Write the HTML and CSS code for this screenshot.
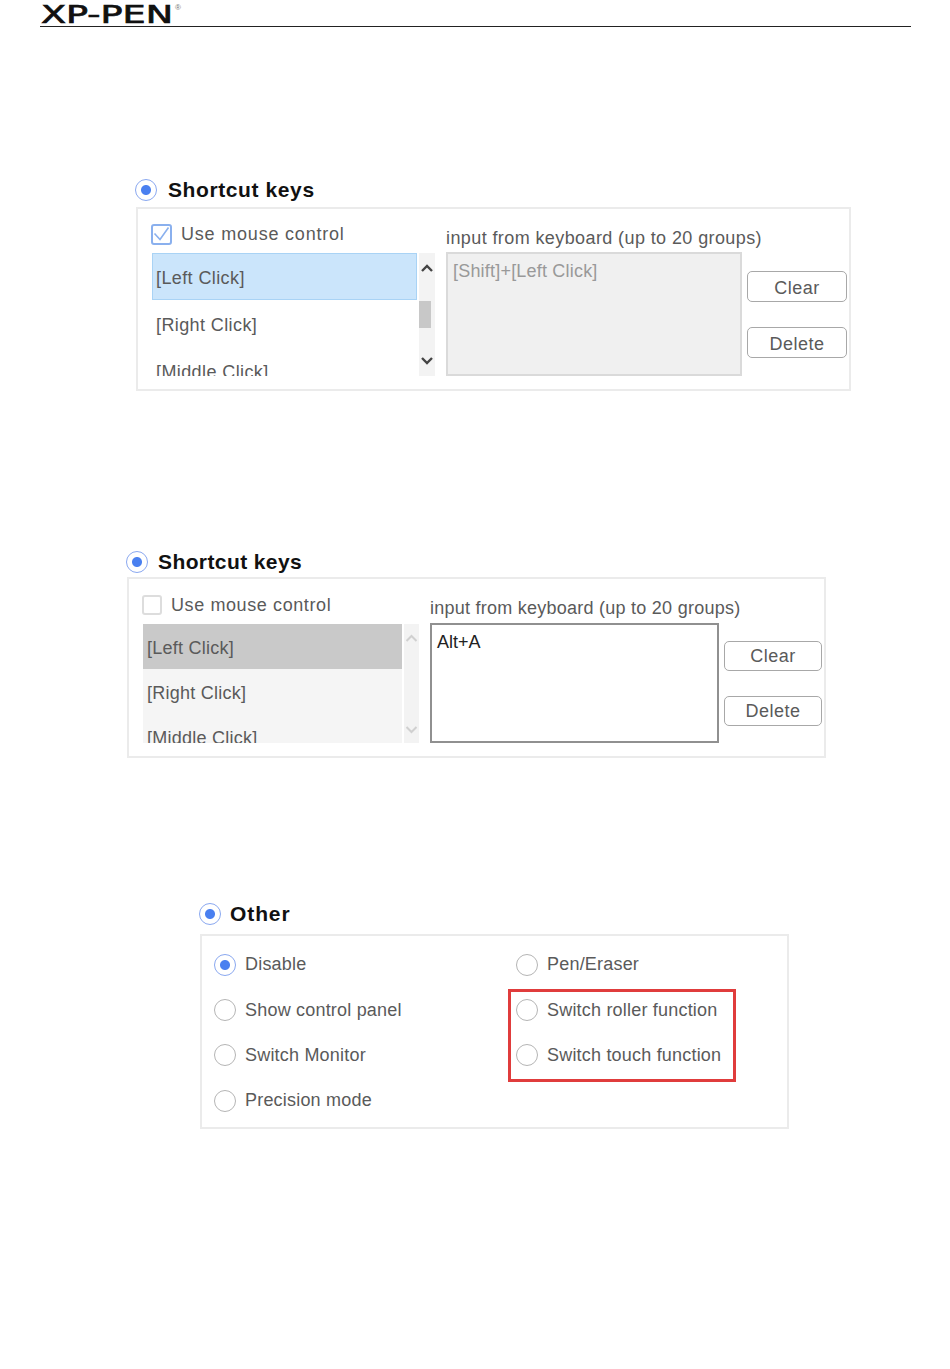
FILE: index.html
```html
<!DOCTYPE html>
<html lang="en">
<head>
    <meta charset="UTF-8">
    <meta name="viewport" content="width=device-width, initial-scale=1.0">
    <title>XP-PEN</title>
    <link rel="stylesheet" href="styles.css">
</head>
<body>
    <header class="page-header">
        <svg class="logo" width="142" height="29" viewBox="0 0 142 29">
            <text x="0" y="22.5" textLength="132" lengthAdjust="spacingAndGlyphs" class="logo-text">XP-PEN</text>
            <text x="134" y="10" class="logo-mark">®</text>
        </svg>
    </header>

    <section class="group group-one">
        <div class="group-title"><span class="radio checked"></span>Shortcut keys</div>
        <div class="panel">
            <div class="left-col">
                <label class="check-row">
                    <span class="checkbox on">
                        <svg width="21" height="21" viewBox="0 0 21 21"><path d="M3.5 9.5 L9 15.5 L17.5 3.5" fill="none" stroke="#8ab0ee" stroke-width="1.6"/></svg>
                    </span>
                    Use mouse control
                </label>
                <div class="list-wrap">
                    <ul class="key-list">
                        <li class="selected">[Left Click]</li>
                        <li>[Right Click]</li>
                        <li>[Middle Click]</li>
                    </ul>
                    <div class="scrollbar">
                        <svg width="16" height="16" viewBox="0 0 16 16"><path d="M3 11 L8 6 L13 11" fill="none" stroke="#444" stroke-width="2.4"/></svg>
                        <span class="thumb"></span>
                        <svg width="16" height="16" viewBox="0 0 16 16"><path d="M3 5 L8 10 L13 5" fill="none" stroke="#444" stroke-width="2.4"/></svg>
                    </div>
                </div>
            </div>
            <div class="right-col">
                <div class="input-label">input from keyboard (up to 20 groups)</div>
                <div class="input-box disabled">[Shift]+[Left Click]</div>
            </div>
            <div class="buttons">
                <button class="btn">Clear</button>
                <button class="btn">Delete</button>
            </div>
        </div>
    </section>

    <section class="group group-two">
        <div class="group-title"><span class="radio checked"></span>Shortcut keys</div>
        <div class="panel">
            <div class="left-col">
                <label class="check-row">
                    <span class="checkbox"></span>
                    Use mouse control
                </label>
                <div class="list-wrap">
                    <ul class="key-list">
                        <li class="selected">[Left Click]</li>
                        <li>[Right Click]</li>
                        <li>[Middle Click]</li>
                    </ul>
                    <div class="scrollbar">
                        <svg width="15" height="16" viewBox="0 0 15 16"><path d="M2.5 11 L7.5 6 L12.5 11" fill="none" stroke="#d0d0d0" stroke-width="2"/></svg>
                        <svg width="15" height="16" viewBox="0 0 15 16"><path d="M2.5 5 L7.5 10 L12.5 5" fill="none" stroke="#d0d0d0" stroke-width="2"/></svg>
                    </div>
                </div>
            </div>
            <div class="right-col">
                <div class="input-label">input from keyboard (up to 20 groups)</div>
                <div class="input-box">Alt+A</div>
            </div>
            <div class="buttons">
                <button class="btn">Clear</button>
                <button class="btn">Delete</button>
            </div>
        </div>
    </section>

    <section class="group group-three">
        <div class="group-title"><span class="radio checked"></span>Other</div>
        <div class="panel options">
            <div class="option-col">
                <div class="option"><span class="radio checked"></span>Disable</div>
                <div class="option"><span class="radio"></span>Show control panel</div>
                <div class="option"><span class="radio"></span>Switch Monitor</div>
                <div class="option"><span class="radio"></span>Precision mode</div>
            </div>
            <div class="option-col">
                <div class="option"><span class="radio"></span>Pen/Eraser</div>
                <div class="option"><span class="radio"></span>Switch roller function</div>
                <div class="option"><span class="radio"></span>Switch touch function</div>
                <div class="highlight"></div>
            </div>
        </div>
    </section>
</body>
</html>
```

FILE: styles.css
```css
* {
    margin: 0;
    padding: 0;
    box-sizing: border-box;
    font-family: 'Liberation Sans', Arial, sans-serif;
}

body {
    background-color: #fff;
    color: #5a5a5a;
    min-height: 1369px;
    overflow: hidden;
}

/* Header */
.page-header {
    margin: 0 39px 0 40px;
    height: 27px;
    border-bottom: 1px solid #222;
}

.logo {
    display: block;
    margin-left: 1px;
}

.logo-text {
    font-size: 24px;
    font-family: 'DejaVu Sans', sans-serif;
    fill: #111;
    stroke: #111;
    stroke-width: 0.7px;
}

.logo-mark {
    font-size: 8px;
    fill: #777;
}

/* Groups */
.group-title {
    display: flex;
    align-items: center;
    gap: 11px;
    height: 24px;
    font-size: 21px;
    font-weight: bold;
    letter-spacing: 0.6px;
    color: #111;
}

.panel {
    display: flex;
    border: 2px solid #ebebeb;
    font-size: 18px;
}

.group-one {
    margin: 151px 0 0 135px;
}

.group-one .panel {
    margin: 5px 0 0 1px;
    width: 715px;
    height: 184px;
    padding: 14px 0 0 13px;
    letter-spacing: 0.4px;
}

.group-two {
    margin: 159px 0 0 126px;
}

.group-two .group-title {
    gap: 10px;
    letter-spacing: 0.4px;
}

.group-two .panel {
    margin: 3px 0 0 1px;
    width: 699px;
    height: 181px;
    padding: 15px 0 0 13px;
    letter-spacing: 0.25px;
}

.group-three {
    margin: 144px 0 0 199px;
}

.group-three .group-title {
    gap: 9px;
    letter-spacing: 0.9px;
}

.group-three .panel {
    margin: 8px 0 0 1px;
    width: 589px;
    height: 195px;
}

/* Radios and checkboxes */
.radio {
    flex: none;
    width: 22px;
    height: 22px;
    border: 1.5px solid #b5b5b5;
    border-radius: 50%;
    background: #fff;
}

.radio.checked {
    border-color: #8aa8f0;
    background: radial-gradient(circle, #4a80f0 0 4.5px, #fff 5.5px);
}

.check-row {
    display: flex;
    align-items: center;
    gap: 9px;
    height: 30px;
    padding-bottom: 8px;
    letter-spacing: 0.8px;
}

.group-two .check-row {
    letter-spacing: 0.6px;
}

.checkbox {
    display: block;
    flex: none;
    width: 20px;
    height: 20px;
    border: 2px solid #ddd;
    border-radius: 3px;
}

.checkbox.on {
    width: 21px;
    height: 21px;
    border-color: #8ab0ee;
}

.checkbox svg {
    display: block;
    margin: -2px;
}

/* Key list */
.list-wrap {
    display: flex;
    gap: 2px;
    margin-left: 1px;
    overflow: hidden;
}

.key-list {
    list-style: none;
    overflow: hidden;
}

.key-list li {
    display: flex;
    align-items: center;
    padding: 4px 0 0 4px;
}

.scrollbar {
    display: flex;
    flex-direction: column;
    justify-content: space-between;
    align-items: flex-start;
    background: #f3f3f3;
}

.thumb {
    display: block;
    width: 12px;
    height: 27px;
    background: #c8c8c8;
}

.group-one .list-wrap {
    height: 123px;
}

.group-one .key-list {
    width: 265px;
}

.group-one .key-list li {
    height: 47px;
}

.group-one .key-list .selected {
    background: #cbe5fb;
    border: 1px solid #a9d3f5;
    padding-left: 3px;
}

.group-one .scrollbar {
    width: 16px;
    padding: 7px 0;
}

.group-two .list-wrap {
    height: 119px;
}

.group-two .key-list {
    width: 259px;
    background: #f5f5f5;
}

.group-two .key-list li {
    height: 45px;
}

.group-two .key-list .selected {
    background: #c9c9c9;
}

.group-two .scrollbar {
    width: 15px;
    padding: 6px 0 5px;
}

/* Keyboard input */
.right-col {
    flex: none;
    margin-left: 11px;
}

.group-one .right-col {
    width: 296px;
}

.group-two .right-col {
    width: 289px;
}

.input-label {
    height: 29px;
    padding-top: 4px;
    white-space: nowrap;
}

.group-one .input-label {
    padding-top: 5px;
}

.input-box {
    padding: 7px 5px;
    color: #222;
    letter-spacing: 0;
}

.group-one .input-box {
    height: 124px;
    border: 2px solid #dadada;
}

.input-box.disabled {
    background: #f0f0f0;
    color: #999;
    letter-spacing: 0.2px;
}

.group-two .input-box {
    height: 120px;
    border: 2px solid #909090;
}

/* Buttons */
.buttons {
    display: flex;
    flex: none;
    flex-direction: column;
    gap: 25px;
    margin-left: 5px;
}

.btn {
    background: #fff;
    color: #5a5a5a;
    border: 1px solid #a8a8a8;
    border-radius: 5px;
    font-size: 18px;
    letter-spacing: 0.5px;
}

.group-one .buttons {
    margin-top: 48px;
}

.group-one .btn {
    width: 100px;
    height: 31px;
    padding-top: 3px;
}

.group-two .buttons {
    margin-top: 47px;
}

.group-two .btn {
    width: 98px;
    height: 30px;
}

/* Other options */
.options {
    padding: 6px 0 0 12px;
}

.option-col {
    position: relative;
    flex: none;
    width: 302px;
}

.option {
    display: flex;
    align-items: center;
    gap: 9px;
    height: 45.4px;
    letter-spacing: 0.2px;
}

.highlight {
    position: absolute;
    top: 47px;
    left: -8px;
    width: 228px;
    height: 93px;
    border: 3px solid #e03c3c;
}
```
